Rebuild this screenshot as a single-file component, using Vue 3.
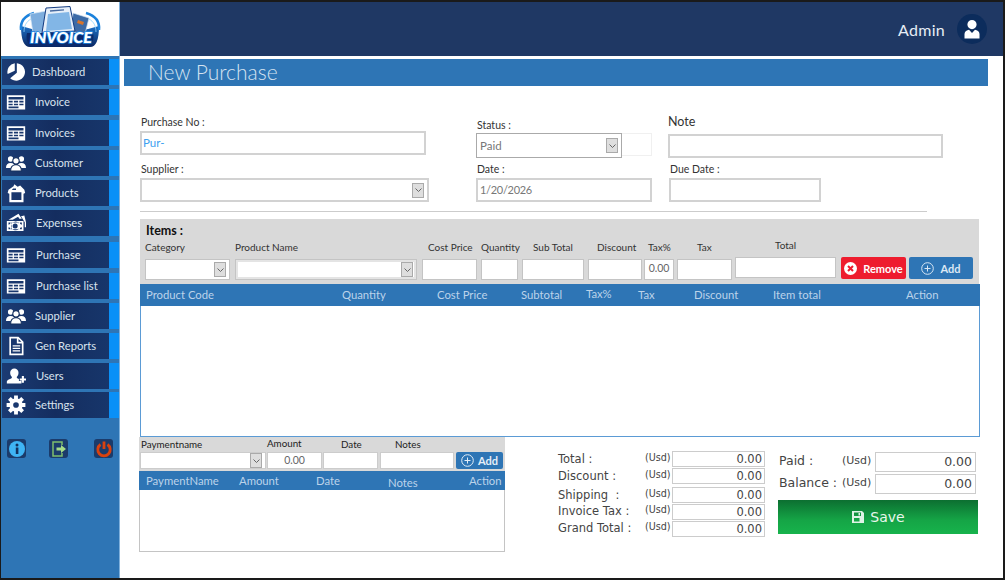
<script setup>
const gearPath = (() => {
  let d = ''
  const n = 8
  for (let i = 0; i < n; i++) {
    const a = (i / n) * Math.PI * 2
    const pts = [[-0.3, 8], [-0.2, 11.5], [0.2, 11.5], [0.3, 8]]
    pts.forEach(([o, r], j) => {
      const x = 12 + r * Math.cos(a + o)
      const y = 12 + r * Math.sin(a + o)
      d += (i === 0 && j === 0 ? 'M' : 'L') + x.toFixed(2) + ' ' + y.toFixed(2)
    })
  }
  return d + 'Z M12 8.6a3.4 3.4 0 1 0 0 6.8a3.4 3.4 0 1 0 0-6.8Z'
})()

const tableIcon = [{ d: 'M1 4h22v17H1z M3 6h18v3H3z M3 10.5h5v2H3z M9.5 10.5h5v2h-5z M16 10.5h5v2h-5z M3 14h5v2H3z M9.5 14h5v2h-5z M16 14h5v2h-5z M3 17.5h12v2H3z' }]
const peopleIcon = [
  { d: 'M5.5 4a3.2 3.2 0 1 1 0 6.4a3.2 3.2 0 1 1 0-6.4z M0 18c0-4 2-6 5.5-6s5.5 2 5.5 6z' },
  { d: 'M18.5 4a3.2 3.2 0 1 1 0 6.4a3.2 3.2 0 1 1 0-6.4z M13 18c0-4 2-6 5.5-6s5.5 2 5.5 6z' },
  { d: 'M12 5.5a3.8 3.8 0 1 1 0 7.6a3.8 3.8 0 1 1 0-7.6z M5.5 21.5c0-5 2.5-7.5 6.5-7.5s6.5 2.500 6.500 7.500z', cut: true }
]
const icons = {
  pie: [{ d: 'M10.500 1.500A10.500 10.500 0 0 0 2 14.500L10.500 10.500Z M13 1.500A10.500 10.500 0 1 1 5 19.500L13 13Z' }],
  table: tableIcon,
  people: peopleIcon,
  box: [{ d: 'M3 8L9 4L10 1.500L14 4.500L17 3L22 8L23 12L21 13V23H4V13L2 12z M6.500 11V20.500H18.500V11z M7 8.500H12V6.500H8.500z' }],
  money: [
    { d: 'M3 8L15 1L19 7H16L14.500 4.500L8 8z M18 4L22 3L24 11V17L22.500 17V11z' },
    { d: 'M1 9.500h20v12H1z M3 11.500v8h2.500a2.500 2.500 0 0 0-2.500-2.500v-3a2.500 2.500 0 0 0 2.500-2.500z M16.500 11.500a2.500 2.500 0 0 0 2.500 2.500v-2.500z M19 17a2.500 2.500 0 0 0-2.500 2.500H19z M11 12.500a3 3 0 0 0 0 6a3 3 0 0 0 0-6z M6.500 11.500h9v1A4.500 3.500 0 0 0 7 15.500a4.500 3.500 0 0 0 8.500 3v1h-9A4 4 0 0 0 6 19.500z' }
  ],
  doc: [{ d: 'M4 1h11l6 6v16H4z M6 3v18h13V9h-6V3z M15 3.500V7h3.500z M8 11h9v1.500H8z M8 14h9v1.500H8z M8 17h9v1.500H8z' }],
  userplus: [{ d: 'M10 3a5 5 0 0 1 5 5c0 2.500-1 4-2 5v1.500l2.500 1V18h3v3H1v-2c0-2.500 5-3.500 6-4.500V13c-1-1-2-2.500-2-5a5 5 0 0 1 5-5z M19 12h2.500v3H24v2.500h-2.500V20H19v-2.500h-2.500V15H19z' }],
  gear: [{ d: gearPath }]
}

const nav = [
  { t: 'Dashboard', i: 'pie', g: 3, x: 5 },
  { t: 'Invoice', i: 'table', g: 4, x: 8 },
  { t: 'Invoices', i: 'table', g: 5, x: 8 },
  { t: 'Customer', i: 'people', g: 4, x: 8 },
  { t: 'Products', i: 'box', g: 4, x: 8 },
  { t: 'Expenses', i: 'money', g: 4, x: 9 },
  { t: 'Purchase', i: 'table', g: 6, x: 9 },
  { t: 'Purchase list', i: 'table', g: 5, x: 9 },
  { t: 'Supplier', i: 'people', g: 4, x: 8 },
  { t: 'Gen Reports', i: 'doc', g: 4, x: 8 },
  { t: 'Users', i: 'userplus', g: 4, x: 9 },
  { t: 'Settings', i: 'gear', g: 3, x: 8 }
]

const fields = [
  { l: 'Category', w: 85, g: 0, x: 0, sel: true },
  { l: 'Product Name', w: 182, g: 5, x: 0, sel: true, inset: true },
  { l: 'Cost Price', w: 55, g: 5, x: 6 },
  { l: 'Quantity', w: 37, g: 4, x: 0 },
  { l: 'Sub Total', w: 62, g: 4, x: 11 },
  { l: 'Discount', w: 54, g: 4, x: 9 },
  { l: 'Tax%', w: 30, g: 2, x: 4, v: '0.00' },
  { l: 'Tax', w: 55, g: 3, x: 20 },
  { l: 'Total', w: 101, g: 3, x: 40, high: true }
]

const mainCols = [
  { t: 'Product Code', w: 196 },
  { t: 'Quantity', w: 95 },
  { t: 'Cost Price', w: 84 },
  { t: 'Subtotal', w: 65 },
  { t: 'Tax%', w: 52, lift: true },
  { t: 'Tax', w: 56 },
  { t: 'Discount', w: 79 },
  { t: 'Item total', w: 133 },
  { t: 'Action', w: 60, lift1: true }
]

const payFields = [
  { l: 'Paymentname', w: 126, g: 0, x: 1, sel: true },
  { l: 'Amount', w: 55, g: 1, x: 0, v: '0.00', lift: true },
  { l: 'Date', w: 55, g: 1, x: 18 },
  { l: 'Notes', w: 74, g: 2, x: 15 }
]

const payCols = [
  { t: 'PaymentName', w: 93 },
  { t: 'Amount', w: 77 },
  { t: 'Date', w: 72 },
  { t: 'Notes', w: 81, drop: true },
  { t: 'Action', w: 36, lift1: true }
]

const totals = [
  { t: 'Total :', g: 0 },
  { t: 'Discount :', g: 1 },
  { t: 'Shipping  :', g: 3 },
  { t: 'Invoice Tax :', g: 1, up: true },
  { t: 'Grand Total :', g: 1, up: true }
]
</script>

<template>
  <div class="frame">
    <aside class="side">
      <div class="logo">
        <svg width="84" height="46" viewBox="0 0 84 46">
          <defs>
            <linearGradient id="lg" x1="0" y1="0" x2="0" y2="1">
              <stop offset="0" stop-color="#1c6fc4" />
              <stop offset="1" stop-color="#0a2763" />
            </linearGradient>
          </defs>
          <path d="M3 20Q3 41 12 41H72Q81 41 81 20Q62 26 42 26Q22 26 3 20Z" fill="url(#lg)" />
          <path d="M3 24C2 14 9 9 16 7" fill="none" stroke="#1b82dc" stroke-width="2.500" />
          <path d="M81 24C82 14 75 9 68 7" fill="none" stroke="#1b82dc" stroke-width="2.500" />
          <path d="M6 26C6 18 10 14 15 12M78 26C78 18 74 14 69 12" fill="none" stroke="#8ad4ff" stroke-width=".8" />
          <path d="M12 8L28 5L30 26L15 27Z" fill="#7eaede" stroke="#d7e6f5" stroke-width=".7" />
          <path d="M55 7L71 12L67 28L53 26Z" fill="#3d6ba6" stroke="#d7e6f5" stroke-width=".7" />
          <path d="M60 14L66 16L65 19L59 17Z" fill="#d6742c" />
          <path d="M28 2L52 0.500L57 25L24 27Z" fill="#e6eff9" stroke="#123a80" />
          <path d="M30 8L51 6L54 23L28 25Z" fill="#82b6e6" />
          <path d="M32 5L46 3.800" stroke="#46699f" stroke-width="1.300" />
          <path d="M9 27H75Q77 34 72 40H12Q7 34 9 27Z" fill="#0b2a6c" />
          <text x="43" y="37" class="logo-text" text-anchor="middle" textLength="62" lengthAdjust="spacingAndGlyphs">INVOICE</text>
        </svg>
      </div>

      <nav class="nav">
        <div v-for="n in nav" :key="n.t" class="nav-item" :style="{ marginTop: n.g + 'px' }">
          <div class="nav-body">
            <span class="nav-icon">
              <svg width="20" height="20" viewBox="0 0 24 24">
                <path v-for="(p, k) in icons[n.i]" :key="k" :d="p.d" fill-rule="evenodd" fill="#fff" :class="{ cut: p.cut }" />
              </svg>
            </span>
            <span class="nav-label" :style="{ marginLeft: n.x + 'px' }">{{ n.t }}</span>
          </div>
          <div class="nav-strip"></div>
        </div>
      </nav>

      <div class="tools">
        <span class="tool">
          <svg width="18" height="18" viewBox="0 0 18 18">
            <circle cx="9" cy="9" r="8" fill="#3fb4f4" />
            <rect x="7.800" y="7.500" width="2.600" height="6.500" fill="#12315f" />
            <circle cx="9" cy="5" r="1.500" fill="#12315f" />
          </svg>
        </span>
        <span class="tool tool-b">
          <svg width="18" height="18" viewBox="0 0 18 18" fill="none">
            <path d="M12 5V2H3V16H12V13" stroke="#7fbf6e" stroke-width="1.500" />
            <path d="M6.500 7.500H11V5L16 9L11 13V10.500H6.500Z" fill="#a6dc88" />
          </svg>
        </span>
        <span class="tool tool-c">
          <svg width="18" height="18" viewBox="0 0 18 18" fill="none">
            <path d="M5.500 4.500A6.200 6.200 0 1 0 12.500 4.500" stroke="#d9420f" stroke-width="2.800" />
            <path d="M9 1.500V9" stroke="#d9420f" stroke-width="2.800" />
          </svg>
        </span>
      </div>
    </aside>

    <main class="main">
      <header class="top">
        <span class="admin">Admin</span>
        <span class="avatar">
          <svg width="18" height="19" viewBox="0 0 18 19">
            <path d="M9 0a4.600 4.600 0 1 1 0 9.200a4.600 4.600 0 1 1 0-9.200z M1.500 18.500V14c0-2.500 2.500-4 4.500-4.300L9 13l3-3.300c2 .3 4.500 1.800 4.500 4.300v4.500z" fill="#fff" />
          </svg>
        </span>
      </header>

      <div class="title-wrap">
        <h1 class="title">New Purchase</h1>
      </div>

      <section class="form">
        <div class="col col-a">
          <label class="lbl">Purchase No :</label>
          <div class="inp tall pur">Pur-</div>
          <label class="lbl next">Supplier :</label>
          <div class="inp tall sel-wide">
            <span class="drop"><svg width="7" height="4" viewBox="0 0 7 4"><path d="M.5.500L3.500 3.500L6.500.500" fill="none" stroke="#666" /></svg></span>
          </div>
        </div>
        <div class="col col-b">
          <label class="lbl">Status :</label>
          <div class="status-row">
            <div class="inp status grey">Paid
              <span class="drop"><svg width="7" height="4" viewBox="0 0 7 4"><path d="M.5.500L3.500 3.500L6.500.500" fill="none" stroke="#666" /></svg></span>
            </div>
            <div class="ghost"></div>
          </div>
          <label class="lbl next-b">Date :</label>
          <div class="inp tall grey date">1/20/2026</div>
        </div>
        <div class="col col-c">
          <label class="lbl note-lbl">Note</label>
          <div class="inp tall note"></div>
          <label class="lbl next-b due-lbl">Due Date :</label>
          <div class="inp tall due"></div>
        </div>
      </section>

      <div class="divider"></div>

      <section class="items">
        <div class="items-title">Items :</div>
        <div class="items-row">
          <div v-for="f in fields" :key="f.l" class="field" :class="{ high: f.high }" :style="{ width: f.w + 'px', marginLeft: f.g + 'px' }">
            <span class="field-lbl" :style="{ paddingLeft: f.x + 'px' }">{{ f.l }}</span>
            <div class="box" :class="{ inset: f.inset }">
              <span v-if="f.v" class="box-val">{{ f.v }}</span>
              <span v-if="f.sel" class="drop"><svg width="7" height="4" viewBox="0 0 7 4"><path d="M.5.500L3.500 3.500L6.500.500" fill="none" stroke="#666" /></svg></span>
            </div>
          </div>
          <button class="btn remove">
            <svg width="13" height="13" viewBox="0 0 13 13">
              <circle cx="6.500" cy="6.500" r="6.500" fill="#fff" />
              <path d="M4 4L9 9M9 4L4 9" stroke="#ee1c2e" stroke-width="2" />
            </svg>
            Remove
          </button>
          <button class="btn add">
            <svg width="13" height="13" viewBox="0 0 13 13" fill="none" stroke="#d8e6f4">
              <circle cx="6.500" cy="6.500" r="5.800" />
              <path d="M6.500 3.500V9.500M3.500 6.500H9.500" />
            </svg>
            Add
          </button>
        </div>
      </section>

      <section class="grid-main">
        <div class="head">
          <span v-for="c in mainCols" :key="c.t" class="hc" :class="{ lift: c.lift, lift1: c.lift1 }" :style="{ width: c.w + 'px' }">{{ c.t }}</span>
        </div>
      </section>

      <section class="bottom">
        <div class="pay">
          <div class="pay-panel">
            <div v-for="f in payFields" :key="f.l" class="pay-field" :style="{ width: f.w + 'px', marginLeft: f.g + 'px' }">
              <span class="pay-lbl" :class="{ up: f.lift }" :style="{ paddingLeft: f.x + 'px' }">{{ f.l }}</span>
              <div class="box pay-box">
                <span v-if="f.v" class="box-val center">{{ f.v }}</span>
                <span v-if="f.sel" class="drop"><svg width="7" height="4" viewBox="0 0 7 4"><path d="M.5.500L3.500 3.500L6.500.500" fill="none" stroke="#666" /></svg></span>
              </div>
            </div>
            <button class="btn add pay-add">
              <svg width="13" height="13" viewBox="0 0 13 13" fill="none" stroke="#e4eef8">
                <circle cx="6.500" cy="6.500" r="5.800" />
                <path d="M6.500 3.500V9.500M3.500 6.500H9.500" />
              </svg>
              Add
            </button>
          </div>
          <div class="pay-table">
            <div class="pay-head">
              <span v-for="c in payCols" :key="c.t" class="hc" :class="{ drop1: c.drop, lift1: c.lift1 }" :style="{ width: c.w + 'px' }">{{ c.t }}</span>
            </div>
          </div>
        </div>

        <div class="totals">
          <div v-for="t in totals" :key="t.t" class="t-row" :class="{ up: t.up }" :style="{ marginTop: t.g + 'px' }">
            <span class="t-lbl">{{ t.t }}</span>
            <span class="t-usd">(Usd)</span>
            <span class="t-val">0.00</span>
          </div>
        </div>

        <div class="summary">
          <div class="s-row">
            <span class="s-lbl">Paid :</span>
            <span class="s-usd">(Usd)</span>
            <span class="s-val">0.00</span>
          </div>
          <div class="s-row second">
            <span class="s-lbl">Balance :</span>
            <span class="s-usd">(Usd)</span>
            <span class="s-val">0.00</span>
          </div>
          <button class="save">
            <svg width="14" height="14" viewBox="0 0 14 14">
              <path d="M1 1h10l2 2v10H1z M3 2.500v3.500h7V2.500z M3 8v3.500h5.500V8z M7.500 3h1.500v2.500H7.500z" fill="#dff3e6" fill-rule="evenodd" />
            </svg>
            Save
          </button>
        </div>
      </section>
    </main>
  </div>
</template>

<style>
html, body { margin: 0; background: #1a1a1a; overflow: hidden; }
</style>

<style scoped>
* { box-sizing: border-box; }
.frame {
  width: 1005px; height: 580px; padding: 2px 2px 2px 1px; display: flex;
  background: #1a1a1a; font-family: Lato, "Open Sans", sans-serif; overflow: hidden;
}
.side { width: 119px; flex: none; background: #2e75b5; border-right: 1px solid #7fb0dc; }
.logo { height: 54px; background: #fff; display: flex; justify-content: center; align-items: center; padding-right: 1px; }
.logo-text {
  font: italic 900 14.500px Lato, sans-serif; fill: #fff; stroke: #1f86e0; stroke-width: 1.400px; paint-order: stroke;
}
.nav-item { height: 26px; display: flex; padding-left: 1px; }
.nav-body {
  width: 107px; display: flex; align-items: center; padding-left: 3px;
  background: linear-gradient(90deg, #1b3b73 0%, #142d5f 50%, #17366b 100%);
}
.nav-strip { width: 10px; background: #0a90f7; }
.nav-icon { width: 22px; display: flex; justify-content: center; flex: none; }
.nav-label { font-size: 11.200px; line-height: 14px; padding-bottom: 1px; color: #d9e3ee; white-space: nowrap; }
.cut { stroke: #17305f; stroke-width: 1.300px; }
.tools { display: flex; padding: 21px 0 0 6px; }
.tool { width: 19px; height: 19px; border-radius: 3px; background: #1b3b6b; display: flex; align-items: center; justify-content: center; }
.tool-b { margin-left: 23px; }
.tool-c { margin-left: 26px; }

.main { flex: 1; background: #fff; min-width: 0; }
.top { height: 54px; background: #1f3864; display: flex; justify-content: flex-end; align-items: center; padding-right: 16px; }
.admin { font-size: 16px; color: #e6edf5; margin-right: 12px; letter-spacing: .3px; }
.avatar { width: 30px; height: 30px; border-radius: 50%; background: #0c2c5c; display: flex; align-items: center; justify-content: center; }
.title-wrap { padding: 3px 15px 0 4px; }
.title { margin: 0; height: 27px; background: #2e75b5; color: #d5e3f1; font-size: 21px; font-weight: 300; line-height: 26px; padding-left: 24px; }

.form { display: flex; height: 125px; padding-left: 20px; }
.col { display: flex; flex-direction: column; flex: none; }
.col-a { width: 289px; padding-top: 29px; }
.col-b { width: 176px; margin-left: 47px; padding-top: 32px; }
.col-c { margin-left: 16px; padding-top: 29px; }
.lbl { height: 16px; line-height: 14px; font-size: 10.500px; color: #333; display: block; padding-left: 1px; }
.col-b .lbl:first-child { height: 15px; }
.next { margin-top: 7px; }
.next-b { margin-top: 4px; }
.note-lbl { font-size: 12.500px; margin-bottom: 3px; padding-left: 0; }
.due-lbl { margin-left: 1px; }
.inp { border: 2px solid #d2d2d2; background: #fff; font-size: 11.500px; line-height: 19px; padding-left: 1px; position: relative; color: #777; }
.tall { height: 24px; }
.pur { width: 286px; color: #3ea1f0; }
.sel-wide { width: 289px; }
.date { font-size: 11px; letter-spacing: -.3px; padding-left: 2px; }
.status-row { display: flex; height: 25px; }
.status { width: 146px; height: 25px; border-color: #aaa; border-width: 1px; padding-left: 3px; line-height: 23px; }
.ghost { width: 30px; border: 1px solid #f0f0f0; border-left: none; height: 23px; }
.grey { color: #777; }
.note { width: 275px; }
.due { width: 152px; margin-left: 1px; }
.drop {
  position: absolute; right: 3px; top: 50%; width: 12px; height: 15px; margin-top: -7.500px;
  background: #dedede; border: 1px solid #aaa; display: flex; align-items: center; justify-content: center;
}

.divider { margin-left: 20px; width: 787px; height: 1px; background: #ccc; }
.items { margin: 7px 0 0 20px; width: 839px; height: 65px; background: #d9d9d9; padding-left: 5px; }
.items-title { height: 21px; font-size: 12.500px; font-weight: 700; line-height: 23px; color: #111; padding-left: 1px; }
.items-row { display: flex; }
.field { display: flex; flex-direction: column; flex: none; }
.field-lbl { height: 19px; line-height: 15px; font-size: 10px; color: #333; white-space: nowrap; }
.box { height: 21px; background: #fff; border: 1px solid #c4c4c4; position: relative; }
.inset { box-shadow: inset 0 0 0 2px #e4e4e4; }
.high { margin-top: -2px; }
.high .field-lbl { line-height: 15px; }
.box-val { font-size: 10.500px; color: #666; display: block; text-align: center; line-height: 16px; }
.btn {
  border: none; border-radius: 2px; height: 22px; margin-top: 17px; color: #fff; font: 700 11px Lato, sans-serif;
  display: flex; align-items: center; justify-content: center; gap: 6px; padding: 0; flex: none;
}
.remove { width: 65px; margin-left: 5px; background: #ee1c2e; }
.add { width: 64px; margin-left: 3px; background: #2e75b5; color: #dce8f4; }

.grid-main { margin-left: 20px; width: 840px; height: 153px; border: 1px solid #5b9bd5; border-top: none; background: #fff; }
.head { height: 22px; margin: 0 -1px; background: #2e75b5; display: flex; padding-left: 6px; align-items: center; }
.hc { font-size: 11.300px; color: #bcd3ea; white-space: nowrap; flex: none; line-height: 22px; }
.lift { margin-bottom: 3px; }
.lift1 { margin-bottom: 1px; }
.drop1 { margin-top: 3px; }

.bottom { display: flex; }
.pay { width: 366px; margin-left: 19px; flex: none; }
.pay-panel { height: 34px; background: #d9d9d9; display: flex; padding-left: 1px; }
.pay-field { display: flex; flex-direction: column; flex: none; }
.pay-lbl { height: 15px; line-height: 14px; font-size: 9.800px; color: #222; white-space: nowrap; }
.pay-lbl.up { line-height: 12px; }
.pay-box { height: 17px; border-color: #ccc; }
.pay-box .box-val { line-height: 15px; }
.center { text-align: center; }
.pay-add { width: 47px; height: 17px; margin: 15px 0 0 2px; gap: 4px; color: #e4eef8; }
.pay-table { height: 81px; border: 1px solid #c4c4c4; border-top: none; }
.pay-head { height: 19px; margin: 0 -1px; background: #2e75b5; display: flex; padding-left: 7px; align-items: center; }
.pay-head .hc { line-height: 19px; }

.totals { margin-left: 53px; padding-top: 14px; width: 207px; flex: none; }
.t-row { display: flex; height: 16px; align-items: center; font-family: "DejaVu Sans", sans-serif; color: #444; }
.t-lbl { width: 87px; font-size: 11.500px; line-height: 14px; padding-bottom: 1px; white-space: pre; }
.t-usd { width: 27px; font-size: 9.600px; line-height: 14px; padding-bottom: 2px; white-space: nowrap; }
.up .t-lbl { padding-bottom: 3px; }
.up .t-usd { padding-bottom: 4px; }
.t-val { width: 93px; height: 16px; border: 1px solid #ccc; font-size: 11.500px; line-height: 14px; text-align: right; padding-right: 2px; }

.summary { margin-left: 13px; padding-top: 15px; width: 200px; flex: none; }
.s-row { display: flex; height: 20px; align-items: center; font-family: "DejaVu Sans", sans-serif; color: #444; }
.second { margin-top: 2px; }
.s-lbl { width: 64px; font-size: 12.500px; line-height: 14px; padding: 0 0 3px 1px; white-space: nowrap; }
.s-usd { width: 33px; font-size: 11px; line-height: 14px; padding-bottom: 3px; white-space: nowrap; }
.s-val { width: 101px; height: 20px; border: 1px solid #ccc; font-size: 12.500px; line-height: 18px; text-align: right; padding-right: 3px; }
.save {
  width: 200px; height: 34px; margin-top: 6px; border: none; padding: 0;
  background: linear-gradient(180deg, #0c6f31 0%, #15a546 60%, #17b34c 100%);
  color: #e8f6ec; font: 14px "DejaVu Sans", sans-serif;
  display: flex; align-items: center; justify-content: center; gap: 5px;
}
</style>
